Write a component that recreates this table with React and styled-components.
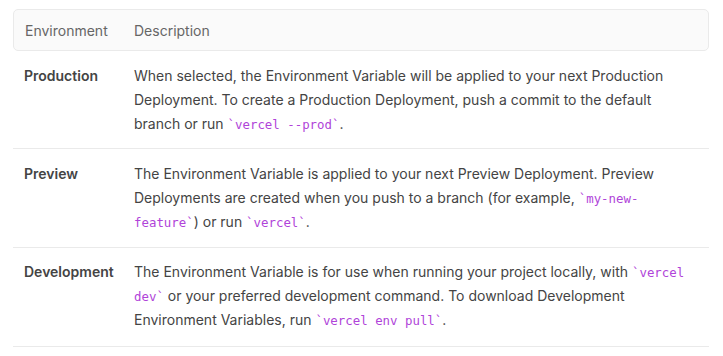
import React from 'react';
import styled, { createGlobalStyle } from 'styled-components';

const GlobalStyle = createGlobalStyle`
  body {
    margin: 0;
    background: #fff;
    font-family: Inter, 'Noto Sans', sans-serif;
    -webkit-font-smoothing: antialiased;
  }
`;

const Root = styled.div`
  padding: 9px 14px 0 13px;
`;

const Table = styled.div`
  width: 696px;
  font-size: 14px;
  line-height: 24px;
`;

const HeaderRow = styled.div`
  display: grid;
  grid-template-columns: 120px 1fr;
  height: 42px;
  box-sizing: border-box;
  align-items: center;
  padding-top: 2px;
  background: #fafafa;
  border: 1px solid #eaeaea;
  border-radius: 5px;
  color: #666;
`;

const Row = styled.div`
  display: grid;
  grid-template-columns: 121px 1fr;
  padding: ${(p) => p.pad};
  border-bottom: 1px solid #eaeaea;
  color: #444;
`;

const Cell = styled.div`
  padding: ${(p) => (p.first ? '0 0 0 11px' : '0 12px 0 0')};
`;

const EnvName = styled(Cell)`
  font-weight: 600;
  color: #444;
`;

const Code = styled.code`
  font-family: 'DejaVu Sans Mono', 'Liberation Mono', monospace;
  font-size: 12.4px;
  line-height: 1;
  color: #b044d9;
`;

const rows = [
  {
    env: 'Production',
    pad: '13px 0 12px',
    desc: (
      <>
        When selected, the Environment Variable will be applied to your next Production
        Deployment. To create a Production Deployment, push a commit to the default branch or
        run <Code>`vercel --prod`</Code>.
      </>
    ),
  },
  {
    env: 'Preview',
    pad: '13px 0 13px',
    desc: (
      <>
        The Environment Variable is applied to your next Preview Deployment. Preview
        Deployments are created when you push to a branch (for example,{' '}
        <Code>`my-new-feature`</Code>) or run <Code>`vercel`</Code>.
      </>
    ),
  },
  {
    env: 'Development',
    pad: '12px 0 14px',
    desc: (
      <>
        The Environment Variable is for use when running your project locally, with{' '}
        <Code>`vercel dev`</Code> or your preferred development command. To download Development
        Environment Variables, run <Code>`vercel env pull`</Code>.
      </>
    ),
  },
];

const App = () => (
  <Root>
    <GlobalStyle />
    <Table>
      <HeaderRow>
        <Cell first>Environment</Cell>
        <Cell>Description</Cell>
      </HeaderRow>
      {rows.map((r) => (
        <Row key={r.env} pad={r.pad}>
          <EnvName first>{r.env}</EnvName>
          <Cell>{r.desc}</Cell>
        </Row>
      ))}
    </Table>
  </Root>
);

export default App;
